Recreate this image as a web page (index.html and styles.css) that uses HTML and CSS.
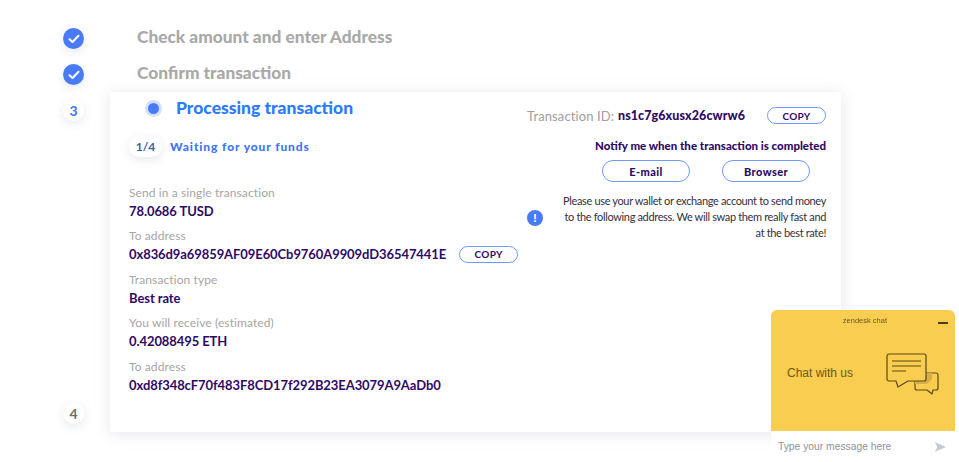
FILE: index.html
```html
<!DOCTYPE html>
<html>
<head>
  <meta charset="UTF-8" />
  <link rel="stylesheet" href="styles.css">
</head>
<body>
  <div class="page">
    <div class="rail">
      <div class="step-dot done">
        <svg width="12" height="10" viewBox="0 0 12 10"><path d="M1.5 5.2 4.5 8 10.5 1.8" fill="none" stroke="#fff" stroke-width="2" stroke-linecap="round" stroke-linejoin="round"/></svg>
      </div>
      <div class="step-dot done">
        <svg width="12" height="10" viewBox="0 0 12 10"><path d="M1.5 5.2 4.5 8 10.5 1.8" fill="none" stroke="#fff" stroke-width="2" stroke-linecap="round" stroke-linejoin="round"/></svg>
      </div>
      <div class="step-dot active">3</div>
      <div class="step-dot last">4</div>
    </div>

    <div class="main">
      <div class="step-title">Check amount and enter Address</div>
      <div class="step-title">Confirm transaction</div>

      <div class="card">
        <div class="card-left">
          <div class="card-head">
            <span class="pulse"></span>
            <h1 class="card-title">Processing transaction</h1>
          </div>
          <div class="stage">
            <span class="stage-pill">1/4</span>
            <span class="stage-name">Waiting for your funds</span>
          </div>
          <div class="fields">
            <div class="field">
              <div class="field-label">Send in a single transaction</div>
              <div class="field-value">78.0686 TUSD</div>
            </div>
            <div class="field">
              <div class="field-label">To address</div>
              <div class="field-row">
                <div class="field-value">0x836d9a69859AF09E60Cb9760A9909dD36547441E</div>
                <button class="copy-btn">COPY</button>
              </div>
            </div>
            <div class="field">
              <div class="field-label">Transaction type</div>
              <div class="field-value">Best rate</div>
            </div>
            <div class="field">
              <div class="field-label">You will receive (estimated)</div>
              <div class="field-value">0.42088495 ETH</div>
            </div>
            <div class="field">
              <div class="field-label">To address</div>
              <div class="field-value">0xd8f348cF70f483F8CD17f292B23EA3079A9AaDb0</div>
            </div>
          </div>
        </div>

        <div class="card-right">
          <div class="tx-row">
            <span class="tx-label">Transaction ID:</span>
            <span class="tx-id">ns1c7g6xusx26cwrw6</span>
            <button class="copy-btn">COPY</button>
          </div>
          <div class="notify-title">Notify me when the transaction is completed</div>
          <div class="notify-btns">
            <button class="notify-btn">E-mail</button>
            <button class="notify-btn">Browser</button>
          </div>
          <div class="notice">
            <span class="notice-icon">!</span>
            <p class="notice-text">Please use your wallet or exchange account to send money to the following address. We will swap them really fast and at the best rate!</p>
          </div>
        </div>
      </div>
    </div>
  </div>

  <div class="chat">
    <div class="chat-body">
      <div class="chat-top">
        <span class="chat-brand">zendesk chat</span>
        <span class="chat-min"></span>
      </div>
      <div class="chat-main">
        <span class="chat-text">Chat with us</span>
        <svg width="54" height="42" viewBox="0 0 54 42" fill="none" stroke="#5c4a17" stroke-width="1.2" stroke-linejoin="round">
          <path d="M29 20h21a2 2 0 0 1 2 2v13a2 2 0 0 1-2 2h-3l-1 4-5-4h-10a2 2 0 0 1-2-2z" fill="#f9cd4f"/>
          <path d="M29 28h11v-8h6v6l-5 5H29z" fill="#d9ae45" stroke="none"/>
          <path d="M3 1h35a2 2 0 0 1 2 2v23a2 2 0 0 1-2 2H22l-10 6-2-6H3a2 2 0 0 1-2-2V3a2 2 0 0 1 2-2z" fill="#f9cd4f"/>
          <path d="M6 8h29M6 13h29M6 18h14"/>
        </svg>
      </div>
    </div>
    <div class="chat-input">
      <span class="chat-placeholder">Type your message here</span>
      <svg width="11" height="10" viewBox="0 0 14 12"><path d="M0 0 14 6 0 12 3 6z" fill="#c3c9d2"/></svg>
    </div>
  </div>
</body>
</html>
```

FILE: styles.css
```css
* { box-sizing: border-box; }
body {
  margin: 0;
  background: #ffffff;
  font-family: Lato, "Open Sans", sans-serif;
  font-size: 12px;
  overflow: hidden;
  height: 100vh;
}
.page {
  display: flex;
  padding: 19px 0 0 63px;
}
.rail {
  width: 47px;
  flex: none;
  padding-top: 9px;
  display: flex;
  flex-direction: column;
  height: 405px;
}
.step-dot {
  width: 21px;
  height: 21px;
  border-radius: 50%;
  background: #fff;
  display: flex;
  align-items: center;
  justify-content: center;
  font-size: 14px;
  font-weight: 700;
  box-shadow: 0 3px 10px rgba(60, 70, 110, 0.12);
  margin-bottom: 15px;
}
.step-dot.done { background: #4a7bf7; }
.step-dot.active { color: #3f74f5; margin-bottom: 0; }
.step-dot.last { color: #6d6d6d; margin-top: auto; margin-bottom: 0; }
.main {
  width: 731px;
  flex: none;
}
.step-title {
  height: 36px;
  padding-left: 27px;
  line-height: 36px;
  font-size: 17.3px;
  font-weight: 900;
  color: #a9a9a9;
  white-space: nowrap;
}
.card {
  display: grid;
  grid-template-columns: minmax(0, 398px) minmax(0, 299px);
  height: 340px;
  margin-top: 1px;
  padding: 0 15px 0 19px;
  background: #fff;
  box-shadow: 0 2px 16px rgba(60, 70, 110, 0.13);
}
.card-head {
  display: flex;
  align-items: center;
  height: 32px;
  padding-left: 16px;
}
.pulse {
  width: 17px;
  height: 17px;
  border-radius: 50%;
  background: #4a7bf7;
  border: 3px solid #d3e1fd;
  margin-right: 14px;
}
.card-title {
  margin: -2px 0 0;
  font-size: 17.5px;
  font-weight: 900;
  color: #2c7bfb;
}
.stage {
  display: flex;
  align-items: center;
  margin-top: 12px;
  height: 20px;
}
.stage-pill {
  width: 33px;
  height: 21px;
  line-height: 21px;
  text-align: center;
  border-radius: 11px;
  background: #fff;
  box-shadow: 0 3px 10px rgba(60, 70, 110, 0.12);
  font-size: 12px;
  font-weight: 700;
  color: #3f5fa8;
  margin-right: 8px;
}
.stage-name {
  font-size: 12px;
  font-weight: 900;
  letter-spacing: 0.9px;
  color: #3f74f5;
}
.fields {
  margin-top: 27.6px;
}
.field {
  height: 43.5px;
}
.field-label {
  height: 18px;
  line-height: 18px;
  color: #a5a5a5;
  font-size: 12px;
  letter-spacing: 0.1px;
}
.field-value {
  line-height: 18px;
  font-size: 13px;
  font-weight: 700;
  color: #2f0a66;
  letter-spacing: -0.08px;
  white-space: nowrap;
}
.field-row {
  display: flex;
  align-items: center;
  gap: 13px;
}
.copy-btn {
  flex: none;
  width: 59px;
  height: 17px;
  padding: 0;
  background: #fff;
  border: 1px solid #6f9af8;
  border-radius: 9px;
  font-family: inherit;
  font-size: 10px;
  font-weight: 700;
  letter-spacing: 0.3px;
  color: #2f0a66;
}
.tx-row {
  display: flex;
  align-items: center;
  justify-content: flex-end;
  height: 17px;
  margin-top: 15px;
  white-space: nowrap;
}
.tx-label {
  font-size: 13px;
  color: #a0a0a0;
  letter-spacing: 0.1px;
  margin-right: 4px;
}
.tx-id {
  font-size: 12.5px;
  font-weight: 900;
  color: #2f0a66;
  letter-spacing: 0.07px;
  margin-right: 22px;
}
.notify-title {
  margin-top: 14px;
  line-height: 16px;
  text-align: right;
  font-size: 11.5px;
  font-weight: 900;
  color: #2f0a66;
}
.notify-btns {
  display: flex;
  justify-content: flex-end;
  gap: 32px;
  margin-top: 6px;
  padding-right: 16px;
}
.notify-btn {
  width: 88px;
  height: 22px;
  padding: 0;
  background: #fff;
  border: 1px solid #6f9af8;
  border-radius: 11px;
  font-family: inherit;
  font-size: 11px;
  font-weight: 900;
  letter-spacing: 0.4px;
  color: #2f0a66;
}
.notice {
  display: flex;
  align-items: center;
  justify-content: space-between;
  margin-top: 11px;
}
.notice-icon {
  width: 16px;
  height: 16px;
  line-height: 16px;
  margin-top: 2px;
  border-radius: 50%;
  background: #4a7bf7;
  color: #fff;
  font-size: 12px;
  font-weight: 900;
  text-align: center;
}
.notice-text {
  width: 270px;
  margin: 0;
  font-size: 11px;
  letter-spacing: -0.35px;
  line-height: 16px;
  text-align: right;
  color: #33303d;
}
.chat {
  position: fixed;
  left: 771px;
  top: 310px;
  width: 184px;
  height: 152px;
  font-family: "Liberation Sans", Arial, sans-serif;
}
.chat-body {
  height: 121px;
  background: #f9cd4f;
  border-radius: 6px 6px 0 0;
  color: #6b5820;
}
.chat-top {
  position: relative;
  height: 22px;
  line-height: 22px;
  text-align: right;
  padding-right: 68px;
  font-size: 7.5px;
}
.chat-min {
  position: absolute;
  right: 7px;
  top: 12px;
  width: 10px;
  height: 1.5px;
  background: #4a3c12;
}
.chat-main {
  display: flex;
  align-items: center;
  justify-content: space-between;
  padding: 0 15px 0 16px;
  margin-top: 21px;
}
.chat-text {
  font-size: 12px;
  margin-top: -2px;
}
.chat-input {
  display: flex;
  align-items: center;
  justify-content: space-between;
  height: 31px;
  padding: 0 9px 0 7px;
  background: #fff;
}
.chat-placeholder {
  font-size: 10.3px;
  color: #8d929c;
}
```
